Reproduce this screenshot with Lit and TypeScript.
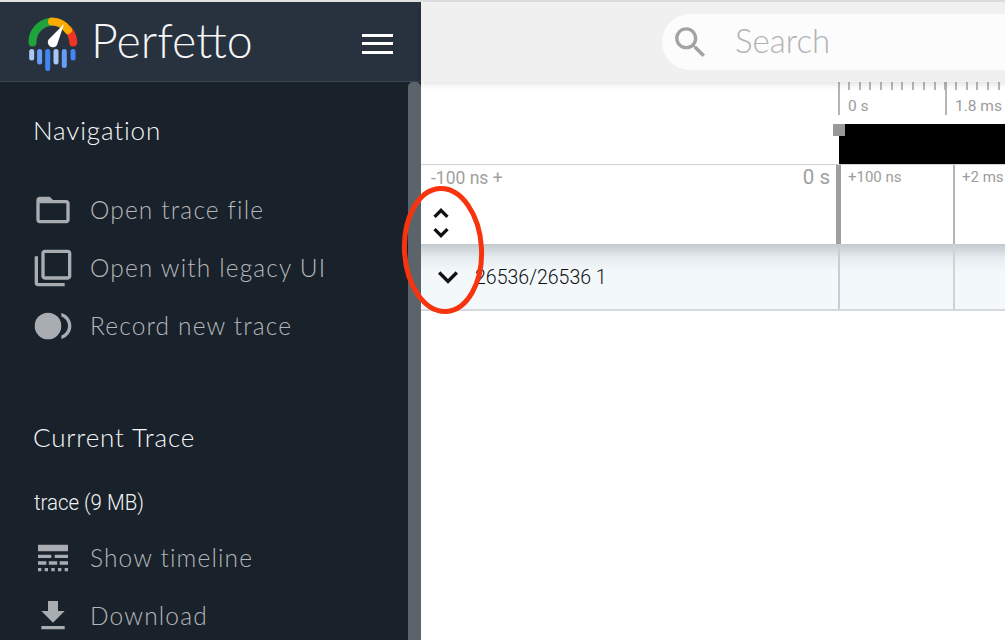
import { LitElement, html, css, svg } from "lit";
import { customElement } from "lit/decorators.js";

const ICONS: Record<string, unknown> = {
  folder: svg`<path d="M20 6h-8l-2-2H4c-1.1 0-2 .9-2 2v12c0 1.1.9 2 2 2h16c1.1 0 2-.9 2-2V8c0-1.1-.9-2-2-2zm0 12H4V8h16v10z"/>`,
  legacy: svg`<path d="M3 5H1v16c0 1.1.9 2 2 2h16v-2H3V5zm18-4H7c-1.1 0-2 .9-2 2v14c0 1.1.9 2 2 2h14c1.1 0 2-.9 2-2V3c0-1.1-.9-2-2-2zm0 16H7V3h14v14z"/>`,
  record: svg`<circle cx="9" cy="12" r="8"/><path d="M17 4.26v2.09c2.33.82 4 3.04 4 5.65s-1.67 4.83-4 5.65v2.09c3.45-.89 6-4.01 6-7.74s-2.55-6.85-6-7.74z"/>`,
  timeline: svg`<path d="M3 16h5v-2H3v2zm6.5 0h5v-2h-5v2zm6.5 0h5v-2h-5v2zM3 20h2v-2H3v2zm4 0h2v-2H7v2zm4 0h2v-2h-2v2zm4 0h2v-2h-2v2zm4 0h2v-2h-2v2zM3 12h8v-2H3v2zm10 0h8v-2h-8v2zM3 4v4h18V4H3z"/>`,
  download: svg`<path d="M19 9h-4V3H9v6H5l7 7 7-7zM5 18v2h14v-2H5z"/>`,
  search: svg`<path d="M15.5 14h-.79l-.28-.27C15.41 12.59 16 11.11 16 9.5 16 5.91 13.09 3 9.5 3S3 5.91 3 9.5 5.91 16 9.5 16c1.61 0 3.09-.59 4.23-1.57l.27.28v.79l5 4.99L20.49 19l-4.99-5zm-6 0C7.01 14 5 11.99 5 9.5S7.01 5 9.5 5 14 7.01 14 9.5 11.99 14 9.5 14z"/>`,
  unfold: svg`<path d="M12 5.83L15.17 9l1.41-1.41L12 3 7.41 7.59 8.83 9 12 5.83zm0 12.34L8.83 15l-1.41 1.41L12 21l4.59-4.59L15.17 15 12 18.17z"/>`,
  expand: svg`<path d="M16.59 8.59L12 13.17 7.41 8.59 6 10l6 6 6-6z"/>`,
};

const icon = (name: string) =>
  html`<svg class="icon" viewBox="0 0 24 24" fill="currentColor">${ICONS[name]}</svg>`;

const logo = html`<svg class="logo" viewBox="26 14 54 60" fill="none">
  <g stroke-width="8" stroke-linecap="round">
    <path d="M32.5 42.5A20.5 20.5 0 0 1 50.5 21.8" stroke="#1fa33c"/>
    <path d="M73.3 42.5A20.5 20.5 0 0 0 68 29.5" stroke="#ee3524"/>
    <path d="M52 21.6A20.5 20.5 0 0 1 68 30" stroke="#f9ab00"/>
  </g>
  <path d="M64 24L57 45A4.9 4.9 0 0 1 48.6 39.6Z" fill="#fff"/>
  <g stroke-width="5" stroke-linecap="round">
    <path d="M31.7 51.5v6.5" stroke="#aac7f6"/>
    <path d="M39.6 51.5v10.5" stroke="#669df6"/>
    <path d="M47.7 51.5v17" stroke="#4285f4"/>
    <path d="M56 51.5v10.5" stroke="#aac7f6"/>
    <path d="M64.3 51.5v14" stroke="#669df6"/>
    <path d="M73 51.5v6.5" stroke="#4285f4"/>
  </g>
</svg>`;

const MINOR_TICKS = Array.from({ length: 16 }, (_, i) => i);

@customElement("app-root")
export class AppRoot extends LitElement {
  static styles = css`
    :host {
      display: block;
      position: relative;
      width: 1005px;
      height: 640px;
      overflow: hidden;
      background: #fff;
      font-family: Roboto, sans-serif;
    }
    .page {
      display: grid;
      grid-template-columns: 421px 1fr;
      height: 640px;
      border-top: 2px solid #e2e2e2;
      box-sizing: border-box;
    }
    .sidebar {
      display: flex;
      flex-direction: column;
      min-height: 0;
      background: #19212b;
      overflow: hidden;
    }
    .brand {
      flex: 0 0 79px;
      display: flex;
      align-items: center;
      padding: 0 28px 0 26px;
      background: #28323e;
      border-bottom: 1px solid #3c4653;
    }
    .logo {
      width: 54px;
      height: 60px;
      flex: none;
      margin-top: 4px;
    }
    .wordmark {
      margin: 0 0 4px 11px;
      font: 300 46.5px/60px Lato, sans-serif;
      color: #f4f5f6;
      flex: 1;
    }
    .burger {
      display: flex;
      flex-direction: column;
      gap: 5.5px;
      width: 31px;
      margin-top: 4px;
    }
    .burger span {
      height: 3px;
      background: #fff;
    }
    .side-body {
      flex: 1;
      display: flex;
      min-height: 0;
    }
    .menu {
      flex: 1;
      padding: 28px 0 0 33px;
    }
    .scroll {
      flex: 0 0 13px;
      background: #5b636b;
      border-radius: 5px 5px 0 0;
    }
    h2 {
      margin: 0 0 31px;
      font: 300 26px/40px Lato, sans-serif;
      letter-spacing: 0.85px;
      color: #f6f7f8;
    }
    .group + .group {
      margin-top: 62px;
    }
    .trace-name {
      font: 300 22px/30px Roboto, sans-serif;
      color: #f1f2f3;
      padding-left: 1px;
      margin-bottom: 11px;
      transform: scaleX(0.93);
      transform-origin: left;
    }
    .item {
      display: flex;
      align-items: center;
      gap: 17px;
      height: 58px;
      color: #b5b7b9;
      font: 300 24.5px/40px Lato, sans-serif;
      letter-spacing: 1.15px;
    }
    .icon {
      width: 40px;
      height: 40px;
      flex: none;
      display: block;
    }
    .item .icon {
      color: #a9adb1;
    }
    .main {
      display: flex;
      flex-direction: column;
      min-width: 0;
    }
    .topbar {
      flex: 0 0 80px;
      display: flex;
      align-items: center;
      padding-left: 241px;
      background: #f0f0f0;
      position: relative;
      z-index: 2;
      box-shadow: 0 2px 7px rgba(0, 0, 0, 0.13);
    }
    .search {
      flex: 1;
      height: 56px;
      display: flex;
      align-items: center;
      gap: 10px;
      padding-left: 8px;
      background: #fcfcfc;
      border-radius: 28px 0 0 28px;
      color: #a3a3a3;
    }
    .search .icon {
      width: 41px;
      height: 41px;
    }
    .search span {
      font: 300 33px/40px Lato, sans-serif;
      color: #b2b2b2;
      margin: 0 0 4px 14px;
    }
    .overview {
      flex: 0 0 83px;
      display: grid;
      grid-template-columns: 417px 1fr;
      border-bottom: 1px solid #d2d2d2;
      box-sizing: border-box;
      background: #fff;
    }
    .ov-scale {
      display: flex;
      flex-direction: column;
      min-width: 0;
    }
    .minor {
      display: flex;
      gap: 8.7px;
      height: 8px;
      flex: none;
      padding-left: 10px;
      overflow: hidden;
    }
    .minor i {
      flex: 0 0 2px;
      background: #b9b9b9;
    }
    .ov-labels {
      display: flex;
      height: 33px;
      margin-top: -8px;
    }
    .ov-labels div {
      flex: 0 0 107px;
      box-sizing: border-box;
      border-left: 2px solid #b4b4b4;
      padding: 16px 0 0 8px;
      font: 400 15.5px/16px Roboto, sans-serif;
      color: #9c9c9c;
      white-space: nowrap;
    }
    .ov-bar {
      flex: 1;
      margin: 9px 0 0 1px;
      background: #000;
      position: relative;
    }
    .handle {
      position: absolute;
      left: -6px;
      top: 0;
      width: 12px;
      height: 12px;
      background: #999;
    }
    .axis {
      flex: 0 0 79px;
      display: grid;
      grid-template-columns: 415px 5px 112px 1fr;
      background: #fff;
    }
    .axis-left {
      display: flex;
      flex-direction: column;
      padding: 0 6px 0 10px;
    }
    .axis-text {
      display: flex;
      justify-content: space-between;
      align-items: baseline;
      color: #a0a0a0;
      font: 400 17.5px/24px Roboto, sans-serif;
    }
    .axis-text b {
      font-weight: 400;
      font-size: 20.5px;
    }
    .axis-left .icon {
      margin: 13px 0 0 -10px;
      color: #111;
    }
    .thick {
      background: #9f9f9f;
    }
    .cell {
      padding: 3px 0 0 7px;
      font: 400 15px/18px Roboto, sans-serif;
      color: #9c9c9c;
      white-space: nowrap;
    }
    .cell + .cell {
      border-left: 2px solid #b4b4b4;
    }
    .track {
      flex: 0 0 67px;
      box-sizing: border-box;
      display: grid;
      grid-template-columns: 417px 115px 1fr;
      border-bottom: 2px solid #d6d9db;
      background: linear-gradient(#c3cacf, #e6ecef 14px, #f3f8fb 28px);
    }
    .track-head {
      display: flex;
      align-items: center;
      padding-left: 7px;
      color: #111;
      font: 300 21px/28px Roboto, sans-serif;
    }
    .track-head .icon {
      margin-right: 7px;
    }
    .track-head span {
      transform: scaleX(0.93);
      transform-origin: left;
    }
    .lane {
      border-left: 2px solid #c9ccd4;
    }
    .lane + .lane {
      border-left: 2px solid #cfd3d5;
    }
    .mark {
      position: absolute;
      left: 396px;
      top: 180px;
      width: 94px;
      height: 140px;
      z-index: 5;
      pointer-events: none;
    }
  `;

  private row(name: string, label: string) {
    return html`<div class="item">${icon(name)}<span>${label}</span></div>`;
  }

  render() {
    return html`
      <div class="page">
        <aside class="sidebar">
          <header class="brand">
            ${logo}
            <div class="wordmark">Perfetto</div>
            <div class="burger"><span></span><span></span><span></span></div>
          </header>
          <div class="side-body">
            <nav class="menu">
              <section class="group">
                <h2>Navigation</h2>
                ${this.row("folder", "Open trace file")}
                ${this.row("legacy", "Open with legacy UI")}
                ${this.row("record", "Record new trace")}
              </section>
              <section class="group trace">
                <h2>Current Trace</h2>
                <div class="trace-name">trace (9 MB)</div>
                ${this.row("timeline", "Show timeline")}
                ${this.row("download", "Download")}
              </section>
            </nav>
            <div class="scroll"></div>
          </div>
        </aside>
        <main class="main">
          <div class="topbar">
            <div class="search">${icon("search")}<span>Search</span></div>
          </div>
          <div class="overview">
            <div></div>
            <div class="ov-scale">
              <div class="minor">${MINOR_TICKS.map(() => html`<i></i>`)}</div>
              <div class="ov-labels"><div>0 s</div><div>1.8 ms</div></div>
              <div class="ov-bar"><div class="handle"></div></div>
            </div>
          </div>
          <div class="axis">
            <div class="axis-left">
              <div class="axis-text"><span>-100 ns +</span><b>0 s</b></div>
              ${icon("unfold")}
            </div>
            <div class="thick"></div>
            <div class="cell">+100 ns</div>
            <div class="cell">+2 ms</div>
          </div>
          <div class="track">
            <div class="track-head">${icon("expand")}<span>26536/26536 1</span></div>
            <div class="lane"></div>
            <div class="lane"></div>
          </div>
        </main>
      </div>
      <svg class="mark" viewBox="396 180 94 140" fill="none">
        <ellipse cx="443" cy="250" rx="38.5" ry="61.5" transform="rotate(-3 443 250)" stroke="#f8340f" stroke-width="5"/>
      </svg>
    `;
  }
}
